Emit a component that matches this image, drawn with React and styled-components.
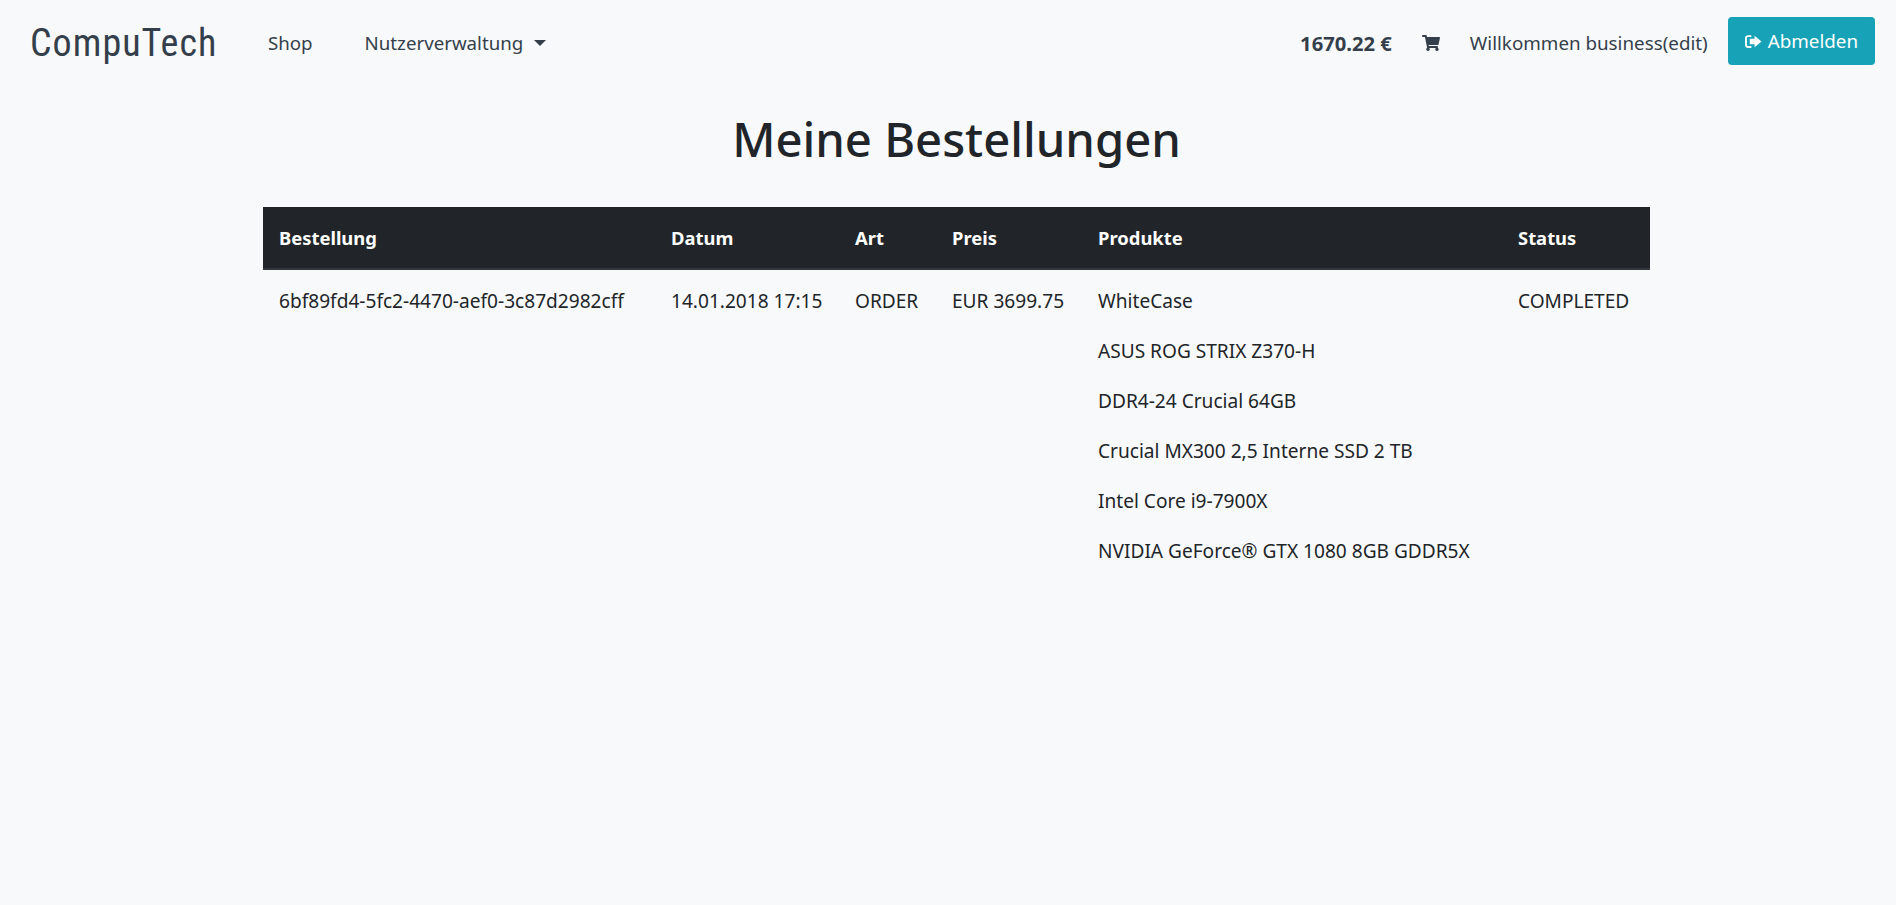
import React from "react"
import styled, { createGlobalStyle } from "styled-components"
import { FaShoppingCart } from "react-icons/fa"

const GlobalStyle = createGlobalStyle`
  html, body {
    margin: 0;
    padding: 0;
    background: #f8f9fa;
  }
  body {
    font-family: "Noto Sans", "Open Sans", Arial, sans-serif;
    font-size: 16px;
    color: #212529;
  }
`

const Navbar = styled.nav`
  display: flex;
  align-items: center;
  height: 85px;
  padding: 0 21px 0 30px;
  color: #343f4b;
`

const Brand = styled.a`
  font-family: "Roboto", sans-serif;
  font-size: 38px;
  font-stretch: condensed;
  letter-spacing: 1.05px;
  width: 187px;
  white-space: nowrap;
  margin-right: 51px;
`

const NavLink = styled.a`
  font-size: 18.7px;
  margin-right: 52px;
  display: flex;
  align-items: center;
`

const Caret = styled.span`
  margin-left: 11px;
  width: 0;
  height: 0;
  border-top: 6px solid #343f4b;
  border-left: 6px solid transparent;
  border-right: 6px solid transparent;
`

const NavRight = styled.div`
  margin-left: auto;
  display: flex;
  align-items: center;
`

const Balance = styled.b`
  font-size: 20.2px;
  margin-right: 30px;
`

const CartIcon = styled(FaShoppingCart)`
  width: 18px;
  height: 16px;
  margin-right: 30px;
`

const Welcome = styled.span`
  font-size: 18.8px;
  margin-right: 20px;
`

const LogoutButton = styled.button`
  display: flex;
  align-items: center;
  gap: 6px;
  height: 48px;
  margin-bottom: 3px;
  padding: 0 17px;
  border: 0;
  border-radius: 4px;
  background: #17a2b8;
  color: #fff;
  font: inherit;
  font-size: 18.8px;
`

const Main = styled.main`
  margin: 0 246px 0 263px;
`

const Title = styled.h1`
  margin: 26px 0 39px;
  text-align: center;
  font-size: 47.2px;
  font-weight: 500;
  line-height: 1.2;
`

const OrderTable = styled.table`
  width: 100%;
  table-layout: fixed;
  border-collapse: collapse;
  font-size: 19.1px;

  th {
    height: 61px;
    padding: 0 0 0 16px;
    background: #212529;
    border-bottom: 2px solid #32383e;
    color: #fff;
    font-size: 18.4px;
    font-weight: 700;
    text-align: left;
  }

  td {
    padding: 19px 0 0 16px;
    vertical-align: top;
    line-height: 24px;
  }
`

const Product = styled.p`
  margin: 0 0 26px;
`

const columns = [392, 184, 97, 146, 420, 148]
const headers = ["Bestellung", "Datum", "Art", "Preis", "Produkte", "Status"]
const products = [
  "WhiteCase",
  "ASUS ROG STRIX Z370-H",
  "DDR4-24 Crucial 64GB",
  "Crucial MX300 2,5 Interne SSD 2 TB",
  "Intel Core i9-7900X",
  "NVIDIA GeForce® GTX 1080 8GB GDDR5X",
]

function SignOutIcon() {
  return (
    <svg width="17" height="15" viewBox="0 0 16 14" fill="currentColor">
      <path d="M6 1H3a3 3 0 0 0-3 3v6a3 3 0 0 0 3 3h3v-1.8H3A1.2 1.2 0 0 1 1.8 10V4A1.2 1.2 0 0 1 3 2.8h3z" />
      <path d="M9 1.5 15.5 7 9 12.5V9.5H4.5v-5H9z" />
    </svg>
  )
}

export default function App() {
  return (
    <>
      <GlobalStyle />
      <Navbar>
        <Brand>CompuTech</Brand>
        <NavLink>Shop</NavLink>
        <NavLink>
          Nutzerverwaltung
          <Caret />
        </NavLink>
        <NavRight>
          <Balance>1670.22 €</Balance>
          <CartIcon />
          <Welcome>Willkommen business(edit)</Welcome>
          <LogoutButton>
            <SignOutIcon />
            Abmelden
          </LogoutButton>
        </NavRight>
      </Navbar>
      <Main>
        <Title>Meine Bestellungen</Title>
        <OrderTable>
          <colgroup>
            {columns.map((w, i) => (
              <col key={i} width={w} />
            ))}
          </colgroup>
          <thead>
            <tr>
              {headers.map((h) => (
                <th key={h}>{h}</th>
              ))}
            </tr>
          </thead>
          <tbody>
            <tr>
              <td>6bf89fd4-5fc2-4470-aef0-3c87d2982cff</td>
              <td>14.01.2018 17:15</td>
              <td>ORDER</td>
              <td>EUR 3699.75</td>
              <td>
                {products.map((p) => (
                  <Product key={p}>{p}</Product>
                ))}
              </td>
              <td>COMPLETED</td>
            </tr>
          </tbody>
        </OrderTable>
      </Main>
    </>
  )
}
